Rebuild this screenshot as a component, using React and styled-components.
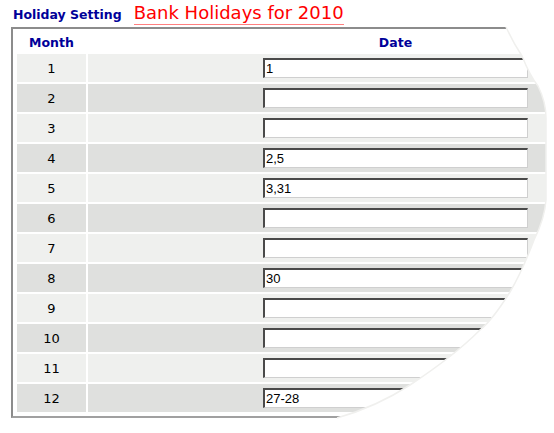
import React from 'react';
import styled, { createGlobalStyle } from 'styled-components';

const GlobalStyle = createGlobalStyle`
  html, body {
    margin: 0;
    padding: 0;
    background: #ffffff;
    overflow: hidden;
  }
`;

// holiday dates per month (empty string = none)
const holidays = ['1', '', '', '2,5', '3,31', '', '', '30', '', '', '', '27-28'];

const Page = styled.div`
  position: relative;
  width: 554px;
  height: 433px;
  overflow: hidden;
  font-family: "DejaVu Sans", Verdana, sans-serif;
`;

const TitleBar = styled.div`
  display: flex;
  align-items: baseline;
  gap: 12px;
  height: 27px;
  padding-left: 13px;
  box-sizing: border-box;
  padding-top: 3px;
`;

const SectionLabel = styled.span`
  font-size: 12.5px;
  font-weight: bold;
  color: #000099;
`;

const PageTitle = styled.span`
  font-size: 18px;
  color: #ff0000;
  line-height: 20px;
  padding-bottom: 1px;
  border-bottom: 1px solid #ff8080;
`;

const Panel = styled.div`
  margin-left: 11px;
  width: 698px;
  box-sizing: border-box;
  border: 2px solid #a0a0a0;
  border-top-color: #8c8c8c;
  border-left-color: #8c8c8c;
  padding: 4px;
`;

const Grid = styled.div`
  display: grid;
  grid-template-columns: 69px 615px;
  grid-auto-rows: 28px;
  row-gap: 2px;
  column-gap: 2px;
`;

const HeadCell = styled.div`
  height: 19px;
  display: flex;
  align-items: center;
  justify-content: center;
  font-size: 12.5px;
  font-weight: bold;
  color: #000099;
  align-self: start;
`;

const Cell = styled.div`
  background: ${(p) => (p.$shade ? '#dfe0de' : '#eff0ee')};
  display: flex;
  align-items: center;
  justify-content: center;
`;

const MonthCell = styled(Cell)`
  font-size: 13px;
  color: #000000;
`;

const DateInput = styled.input`
  width: 265px;
  height: 20px;
  box-sizing: border-box;
  margin: 0;
  padding: 0 0 0 1px;
  border-style: solid;
  border-width: 2px 1px 1px 2px;
  border-color: #4a4a4a #cfcfcf #cfcfcf #4a4a4a;
  background: #ffffff;
  font-family: "Liberation Sans", Arial, sans-serif;
  font-size: 13px;
  color: #000000;
  outline: none;
`;

const Tear = styled.svg`
  position: absolute;
  top: 0;
  left: 0;
  pointer-events: none;
`;

const HeaderGrid = styled(Grid)`
  grid-auto-rows: auto;
  margin-bottom: 2px;
`;

export default function App() {
  return (
    <>
      <GlobalStyle />
      <Page>
        <TitleBar>
          <SectionLabel>Holiday Setting</SectionLabel>
          <PageTitle>Bank Holidays for 2010</PageTitle>
        </TitleBar>
        <Panel>
          <HeaderGrid>
            <HeadCell>Month</HeadCell>
            <HeadCell>Date</HeadCell>
          </HeaderGrid>
          <Grid>
            {holidays.map((d, i) => (
              <React.Fragment key={i}>
                <MonthCell $shade={i % 2 === 1}>{i + 1}</MonthCell>
                <Cell $shade={i % 2 === 1}>
                  <DateInput type="text" defaultValue={d} />
                </Cell>
              </React.Fragment>
            ))}
          </Grid>
        </Panel>
        {/* curled page edge over the right side */}
        <Tear width="554" height="433" viewBox="0 0 554 433">
          <path
            d="M506,0 L506,27 C512,40 518,50 522,56 C526,66 530,76 538,86 C543,96 546,106 546,118 L546,200 C545,215 540,228 534,240 C528,256 520,275 510,292 C500,308 490,322 480,330 C465,345 445,362 410,385 C390,398 365,410 337,418 C300,426 270,430 240,433 L554,433 L554,0 Z"
            fill="#ffffff"
          />
          <path
            d="M506,27 C512,40 518,50 522,56 C526,66 530,76 538,86 C543,96 546,106 546,118 L546,200 C545,215 540,228 534,240 C528,256 520,275 510,292 C500,308 490,322 480,330 C465,345 445,362 410,385 C390,398 365,410 337,418"
            fill="none"
            stroke="#f0f0ee"
            strokeWidth="1.5"
          />
        </Tear>
      </Page>
    </>
  );
}
